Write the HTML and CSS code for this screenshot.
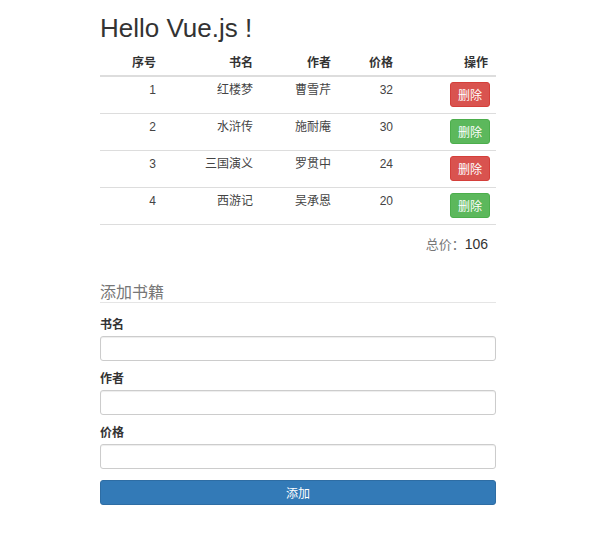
FILE: index.html
```html
<!DOCTYPE html>
<html lang="zh-CN">
<head>
<meta charset="utf-8">
<title>Hello Vue.js</title>
<link rel="stylesheet" href="styles.css">
</head>
<body>
<div class="container">
  <h1 class="title">Hello Vue.js !</h1>
  <table class="books">
    <colgroup>
      <col class="c1"><col class="c2"><col class="c3"><col class="c4"><col class="c5">
    </colgroup>
    <thead>
      <tr><th>序号</th><th>书名</th><th>作者</th><th>价格</th><th>操作</th></tr>
    </thead>
    <tbody>
      <tr><td>1</td><td>红楼梦</td><td>曹雪芹</td><td>32</td><td class="action"><button class="btn btn-danger">删除</button></td></tr>
      <tr><td>2</td><td>水浒传</td><td>施耐庵</td><td>30</td><td class="action"><button class="btn btn-success">删除</button></td></tr>
      <tr><td>3</td><td>三国演义</td><td>罗贯中</td><td>24</td><td class="action"><button class="btn btn-danger">删除</button></td></tr>
      <tr><td>4</td><td>西游记</td><td>吴承恩</td><td>20</td><td class="action"><button class="btn btn-success">删除</button></td></tr>
    </tbody>
  </table>
  <div class="total"><span class="total-label">总价：</span><span class="total-value">106</span></div>

  <h2 class="section">添加书籍</h2>
  <form class="form">
    <div class="group">
      <label class="label">书名</label>
      <input class="input" type="text">
    </div>
    <div class="group">
      <label class="label">作者</label>
      <input class="input" type="text">
    </div>
    <div class="group">
      <label class="label">价格</label>
      <input class="input" type="text">
    </div>
    <button type="button" class="btn btn-primary btn-block">添加</button>
  </form>
</div>
</body>
</html>
```
FILE: styles.css
```css
html, body {
  margin: 0;
  padding: 0;
  background: #fff;
}
body {
  font-family: "Liberation Sans", "Noto Sans CJK SC", sans-serif;
  font-size: 12px;
  color: #333;
}
.container {
  width: 396px;
  margin-left: 100px;
  padding-top: 14px;
}
.title {
  margin: 0 0 8px 0;
  font-size: 26px;
  line-height: 29px;
  font-weight: normal;
  color: #333;
}
.books {
  width: 396px;
  border-collapse: collapse;
  table-layout: fixed;
}
.c1 { width: 64px; }
.c2 { width: 97px; }
.c3 { width: 78px; }
.c4 { width: 62px; }
.c5 { width: 95px; }
.books th {
  text-align: right;
  font-weight: bold;
  padding: 4px 8px;
  line-height: 16px;
  border-bottom: 2px solid #ddd;
  color: #333;
}
.books td {
  text-align: right;
  vertical-align: top;
  padding: 5px 8px 6px 8px;
  line-height: 16px;
  border-bottom: 1px solid #ddd;
  color: #444;
}
.books td.action {
  padding-right: 6px;
}
.btn {
  display: inline-block;
  font-family: "Noto Sans CJK SC", "Liberation Sans", sans-serif;
  font-size: 12px;
  line-height: 23px;
  height: 25px;
  padding: 0 7px;
  border: 1px solid transparent;
  border-radius: 3px;
  color: #fff;
  cursor: pointer;
  margin: 0;
  vertical-align: top;
}
.btn-danger {
  background: #d9534f;
  border-color: #d43f3a;
}
.btn-success {
  background: #5cb85c;
  border-color: #4cae4c;
}
.btn-primary {
  background: #337ab7;
  border-color: #2e6da4;
}
.btn-block {
  display: block;
  width: 100%;
}
.total {
  text-align: right;
  padding: 9px 8px 0 0;
  line-height: 20px;
  font-size: 14px;
}
.total-label {
  color: #777;
  font-size: 13px;
}
.total-value {
  color: #333;
}
.section {
  margin: 29px 0 0 0;
  font-size: 16px;
  line-height: 18px;
  font-weight: normal;
  color: #777;
  padding-bottom: 0;
  border-bottom: 1px solid #e5e5e5;
}
.form {
  margin: 14px 0 0 0;
}
.group {
  display: flex;
  flex-direction: column;
  margin-bottom: 10px;
}
.label {
  font-weight: bold;
  font-size: 12px;
  line-height: 16px;
  margin-bottom: 3px;
  color: #333;
}
.input {
  box-sizing: border-box;
  width: 100%;
  height: 25px;
  margin: 0;
  padding: 2px 8px;
  border: 1px solid #ccc;
  border-radius: 3px;
  box-shadow: inset 0 1px 1px rgba(0,0,0,.075);
  font-size: 12px;
  background: #fff;
}
.form .btn-block {
  margin-top: 11px;
}
```
